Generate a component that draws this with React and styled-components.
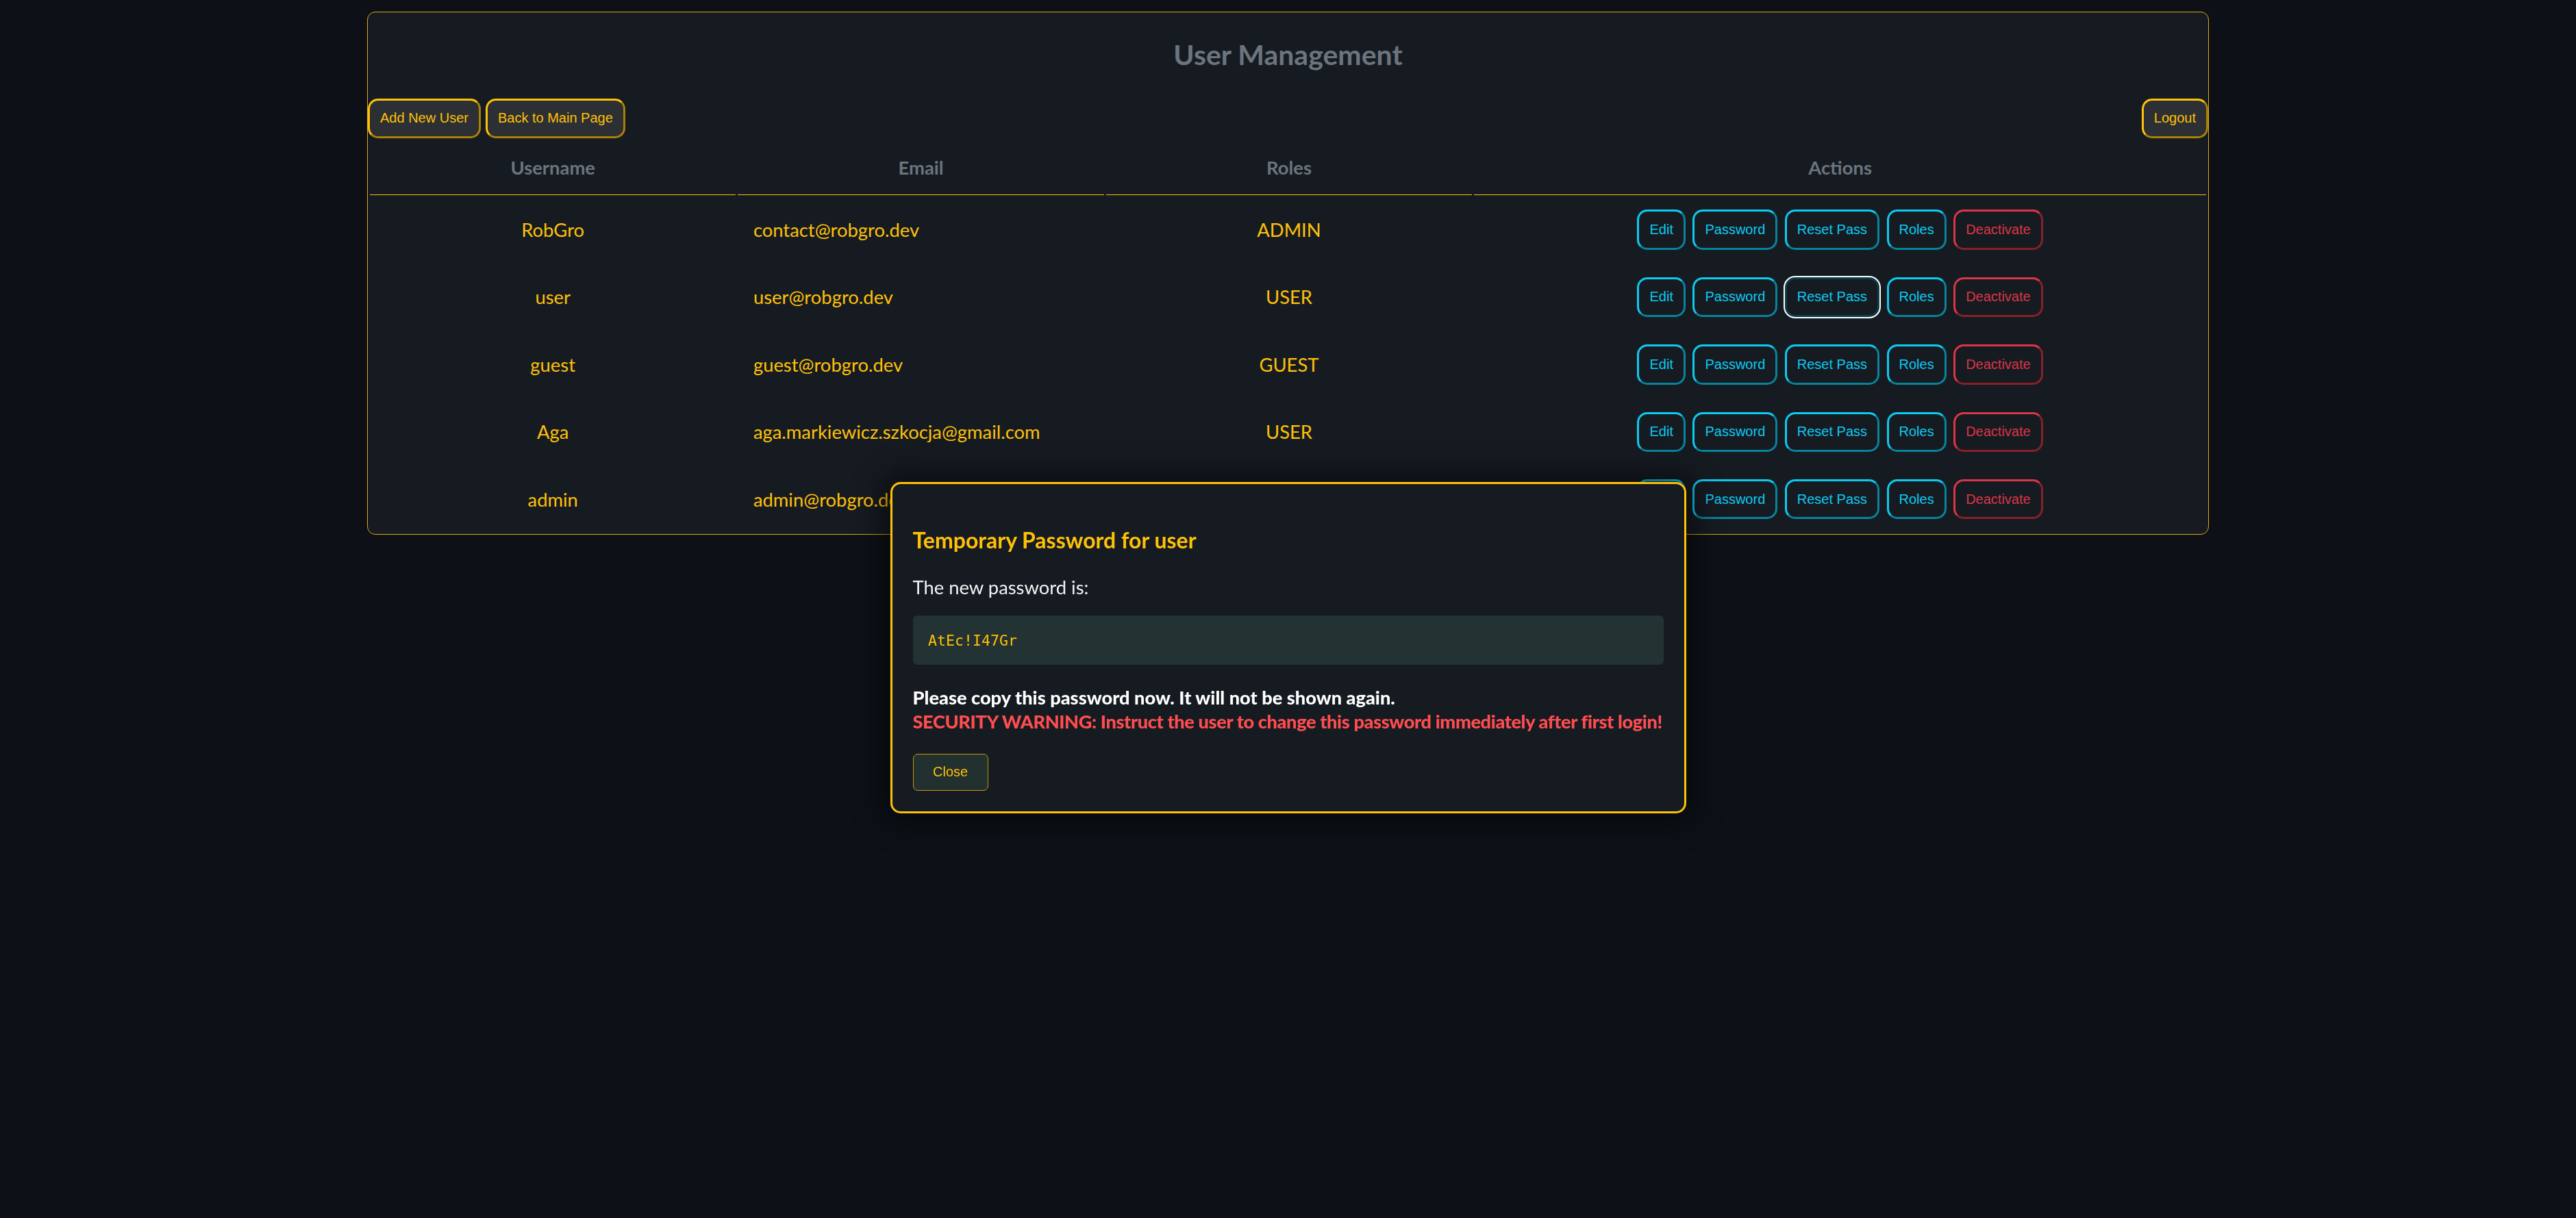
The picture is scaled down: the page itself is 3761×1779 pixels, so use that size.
import React from 'react';
import styled, { createGlobalStyle, css } from 'styled-components';

const GlobalStyle = createGlobalStyle`
    html, body {
        margin: 0;
        padding: 0;
        background: #0d1117;
    }
    body {
        font-family: Lato, 'Open Sans', sans-serif;
        color: #ffc107;
    }
`;

const Panel = styled.div`
    box-sizing: border-box;
    width: 2689px;
    margin: 17px auto 0;
    background: #161b22;
    border: 1px solid #deab0c;
    border-radius: 12px;
`;

const Title = styled.h2`
    margin: 36.5px 0 0;
    font-size: 41px;
    line-height: 49px;
    font-weight: 700;
    color: #6c757d;
    text-align: center;
`;

const Toolbar = styled.div`
    display: flex;
    justify-content: space-between;
    align-items: center;
    margin-top: 40px;
`;

const ButtonGroup = styled.div`
    display: flex;
    gap: ${({ $gap }) => $gap || '7px'};
    justify-content: ${({ $center }) => ($center ? 'center' : 'flex-start')};
`;

const variants = {
    primary: css`
        background: #2c2f33;
        color: #ffc107;
        border-color: #ffc107;
    `,
    info: css`
        background: transparent;
        color: #0dcaf0;
        border-color: #0dcaf0;
    `,
    danger: css`
        background: transparent;
        color: #dc3545;
        border-color: #dc3545;
    `,
    close: css`
        background: #22302f;
        color: #ffc107;
        border: 1.5px solid #c49a0a;
        border-radius: 7px;
        padding: 14.5px 28.5px;
    `,
};

const Button = styled.button`
    font-family: 'Liberation Sans', Arial, sans-serif;
    font-size: 20px;
    line-height: 23px;
    padding: 14.7px 15px;
    border-width: 3px;
    border-style: outset;
    border-radius: 15px;
    cursor: pointer;
    white-space: nowrap;
    ${({ $variant }) => variants[$variant || 'primary']}
    ${({ $focused }) =>
        $focused &&
        css`
            border-color: #0c3e49;
            border-style: solid;
            outline: 2.5px solid #ffffff;
            outline-offset: 0;
        `}
`;

const Table = styled.table`
    width: 100%;
    border-collapse: separate;
    border-spacing: 3px;
    table-layout: fixed;
`;

const Col = styled.col`
    width: ${({ $width }) => $width};
`;

const Th = styled.th`
    padding: 22px 22.5px;
    font-size: 27.4px;
    line-height: 35px;
    font-weight: 700;
    color: #6c757d;
    text-align: center;
    border-bottom: 1px solid #ffc107;
`;

const Td = styled.td`
    padding: 18.5px 22.5px;
    font-size: 27.4px;
    line-height: 35px;
    color: #ffc107;
    text-align: ${({ $align }) => $align || 'center'};
    vertical-align: middle;
    white-space: nowrap;
`;

const Overlay = styled.div`
    position: fixed;
    inset: 0;
    display: flex;
    justify-content: center;
    align-items: flex-start;
    padding-top: 704px;
    box-sizing: border-box;
`;

const Dialog = styled.div`
    box-sizing: border-box;
    width: 1162px;
    padding: 30px;
    background: #161b22;
    border: 3px solid #ffc107;
    border-radius: 15px;
    box-shadow: 0 0 40px 12px rgba(0, 0, 0, 0.55);
`;

const DialogTitle = styled.h3`
    margin: 33px 0 0;
    font-size: 32px;
    line-height: 38.4px;
    font-weight: 700;
    color: #ffc107;
`;

const DialogText = styled.p`
    margin: 31.8px 0 0;
    font-size: 27.4px;
    line-height: 35px;
    color: #f2f2f2;
`;

const PasswordBox = styled.div`
    margin-top: 24px;
    padding: 22.5px;
    background: #233232;
    border-radius: 6px;
    font-family: 'DejaVu Sans Mono', 'Liberation Mono', monospace;
    font-size: 21.6px;
    line-height: 27px;
    color: #ffc107;
`;

const Notice = styled.p`
    margin: 29.8px 0 0;
    font-size: 27.2px;
    line-height: 35px;
    font-weight: 700;
    white-space: nowrap;
`;

const NoticeLine = styled.strong`
    color: ${({ $warn }) => ($warn ? '#ff4d4f' : '#ffffff')};
    letter-spacing: ${({ $warn }) => ($warn ? '-0.4px' : '0')};
`;

const DialogActions = styled.div`
    margin-top: 29.5px;
    display: flex;
`;

const users = [
    { username: 'RobGro', email: 'contact@robgro.dev', role: 'ADMIN' },
    { username: 'user', email: 'user@robgro.dev', role: 'USER' },
    { username: 'guest', email: 'guest@robgro.dev', role: 'GUEST' },
    { username: 'Aga', email: 'aga.markiewicz.szkocja@gmail.com', role: 'USER' },
    { username: 'admin', email: 'admin@robgro.dev', role: 'ADMIN' },
];

export default function App() {
    return (
        <>
            <GlobalStyle />
            <Panel>
                <Title>User Management</Title>
                <Toolbar>
                    <ButtonGroup>
                        <Button>Add New User</Button>
                        <Button>Back to Main Page</Button>
                    </ButtonGroup>
                    <Button>Logout</Button>
                </Toolbar>
                <Table>
                    <colgroup>
                        <Col $width="20%" />
                        <Col $width="20%" />
                        <Col $width="20%" />
                        <Col $width="40%" />
                    </colgroup>
                    <thead>
                        <tr>
                            <Th>Username</Th>
                            <Th>Email</Th>
                            <Th>Roles</Th>
                            <Th>Actions</Th>
                        </tr>
                    </thead>
                    <tbody>
                        {users.map((u, i) => (
                            <tr key={u.username}>
                                <Td>{u.username}</Td>
                                <Td $align="left">{u.email}</Td>
                                <Td>{u.role}</Td>
                                <Td>
                                    <ButtonGroup $center $gap="10.5px">
                                        <Button $variant="info">Edit</Button>
                                        <Button $variant="info">Password</Button>
                                        <Button $variant="info" $focused={i === 1}>Reset Pass</Button>
                                        <Button $variant="info">Roles</Button>
                                        <Button $variant="danger">Deactivate</Button>
                                    </ButtonGroup>
                                </Td>
                            </tr>
                        ))}
                    </tbody>
                </Table>
            </Panel>

            <Overlay>
                <Dialog>
                    <DialogTitle>Temporary Password for user</DialogTitle>
                    <DialogText>The new password is:</DialogText>
                    <PasswordBox>AtEc!I47Gr</PasswordBox>
                    <Notice>
                        <NoticeLine>Please copy this password now. It will not be shown again.</NoticeLine>
                        <br />
                        <NoticeLine $warn>SECURITY WARNING: Instruct the user to change this password immediately after first login!</NoticeLine>
                    </Notice>
                    <DialogActions>
                        <Button $variant="close">Close</Button>
                    </DialogActions>
                </Dialog>
            </Overlay>
        </>
    );
}
